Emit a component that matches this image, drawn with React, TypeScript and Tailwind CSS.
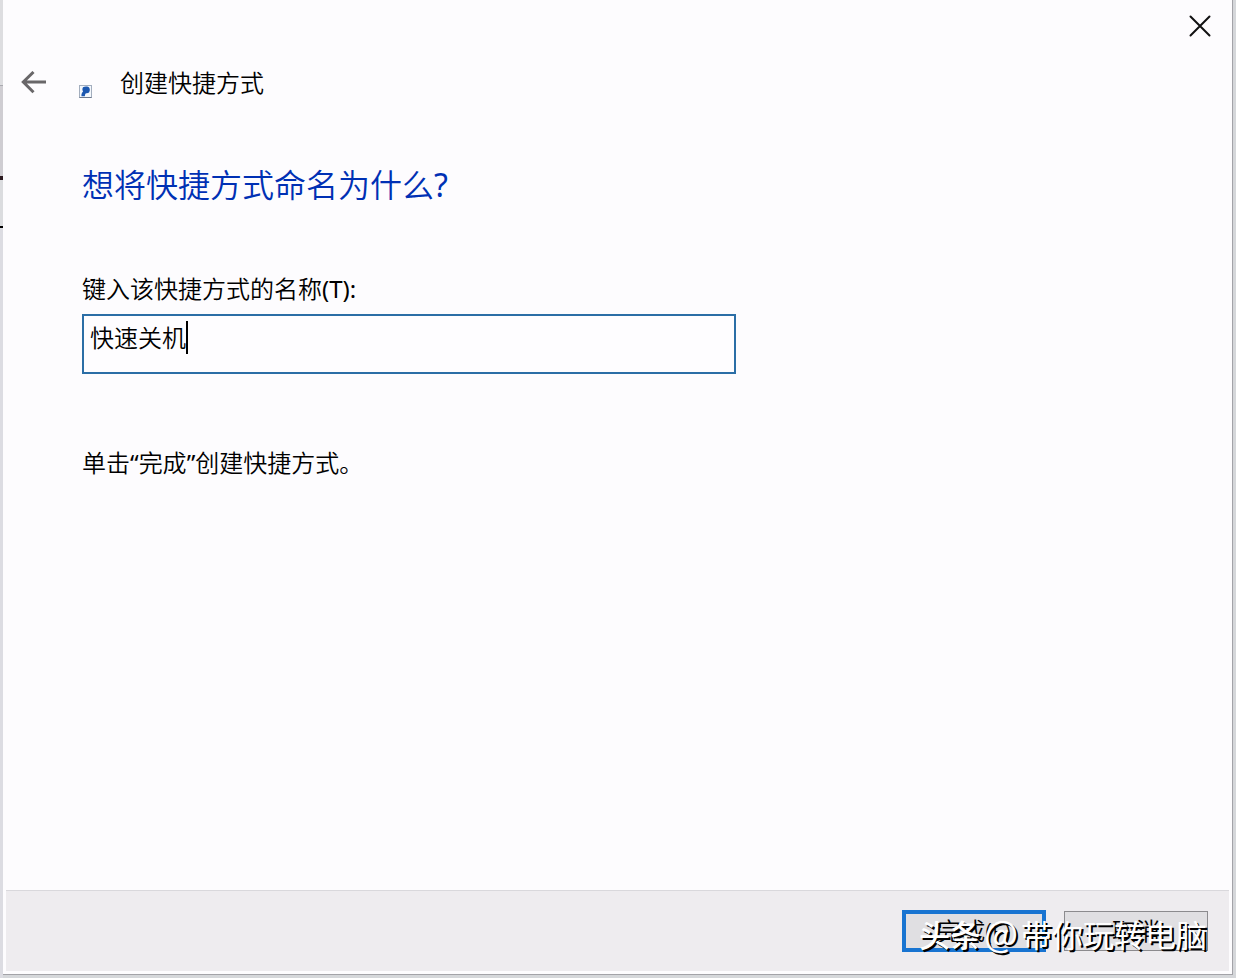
import { useState } from "react";

function BackArrow() {
  return (
    <svg viewBox="0 0 26 24" className="h-6 w-[26px]" fill="none" stroke="#696769" strokeWidth="3" aria-hidden="true">
      <path d="M25 11H2.500M12.500 1 2.300 11l10.200 10.200" />
    </svg>
  );
}

function CloseMark() {
  return (
    <svg viewBox="0 0 22 22" className="size-[22px]" fill="none" stroke="#111" strokeWidth="2" strokeLinecap="round" aria-hidden="true">
      <path d="M1.5 1.5l19 19M20.5 1.5l-19 19" />
    </svg>
  );
}

function ShortcutMark() {
  return (
    <svg viewBox="0 0 13 13" className="size-[13px]" aria-hidden="true">
      <rect x="0.5" y="0.5" width="12" height="12" fill="#f3f7fc" stroke="#a3aebe" />
      <path d="M4 2.300C6 1.200 9.500 1.400 10.400 3c.9 1.700.4 4.300-1.200 5-1.100.3-1.900-.1-2.500.4-.7.7-.6 1.800-.9 2.900H2.500c-.3-2 .2-3.700 1.600-4.900-.9-.8-.9-2.800-.1-4.100z" fill="#1b57b0" />
      <path d="M0.500 12.500h12" stroke="#6c788c" />
    </svg>
  );
}

function DesktopEdge() {
  return (
    <div className="flex w-[3px] shrink-0 flex-col bg-[#dcdce2]" aria-hidden="true">
      <div className="h-[85px] bg-[#dddde0]" />
      <div className="h-px bg-[#aaaab0]" />
      <div className="h-[90px] bg-[#cfcdd2]" />
      <div className="h-1 bg-[#2c1a20]" />
      <div className="h-[46px] bg-[#dbdcdf]" />
      <div className="h-[2px] bg-black" />
    </div>
  );
}

export default function App() {
  const [name, setName] = useState("快速关机");

  return (
    <div className="flex min-h-screen bg-[#d5d7da] font-['Noto_Sans','Noto_Sans_CJK_SC',sans-serif] text-2xl leading-8 font-[350] text-black">
      <DesktopEdge />
      <div className="mr-[3px] mb-[3px] flex flex-1 flex-col border-r border-b border-[#a3a3a8] bg-[#fdfcfe]">
        <div className="flex h-[52px] items-center justify-end pr-[21px]">
          <button type="button" aria-label="关闭">
            <CloseMark />
          </button>
        </div>

        <header className="flex h-[62px] items-center pl-[18px]">
          <button type="button" aria-label="返回" className="mr-8">
            <BackArrow />
          </button>
          <span className="mt-4">
            <ShortcutMark />
          </span>
          <h1 className="ml-7">创建快捷方式</h1>
        </header>

        <main className="flex flex-1 flex-col pt-[51px] pr-8 pl-[79px]">
          <h2 className="text-[32px] leading-10 text-[#0030b4]">
            想将快捷方式命名为什么<span className="font-normal">?</span>
          </h2>
          <label htmlFor="shortcut-name" className="mt-[68px]">
            键入该快捷方式的名称<span className="font-normal">(T):</span>
          </label>
          <div className="relative mt-[9px] w-[654px] max-w-full">
            <input
              id="shortcut-name"
              type="text"
              value={name}
              onChange={(event) => setName(event.target.value)}
              className="block h-[60px] w-full border-2 border-[#2b6ea6] bg-[#fefdff] px-1.5 pb-4 outline-none"
            />
            <span className="absolute top-[7px] left-[104px] h-[33px] w-[2px] bg-black" aria-hidden="true" />
          </div>
          <p className="mt-[73px]">
            单击<span className="font-normal">“</span>完成<span className="font-normal">”</span>创建快捷方式。
          </p>
        </main>

        <footer className="relative mx-[3px] mb-[3px] flex h-[81px] items-center justify-end gap-[18px] border-t border-[#d9d8dc] bg-[#eeecef] pr-[21px]">
          <button type="button" className="h-[42px] w-36 border-4 border-[#1874d1] bg-[#e0dfe2]">
            完成(F)
          </button>
          <button type="button" className="h-10 w-36 border border-[#8c8b8e] bg-[#e0dfe2]">
            取消
          </button>
          <div className="pointer-events-none absolute top-5 right-[22px] flex items-baseline gap-[3px] font-['Noto_Sans_CJK_SC',sans-serif] text-[31px] leading-10 font-normal whitespace-nowrap text-white [text-shadow:2px_2px_0_#000]">
            <span className="font-medium">头条</span>
            <span className="text-4xl leading-10">@</span>
            <span>带你玩转电脑</span>
          </div>
        </footer>
      </div>
    </div>
  );
}
